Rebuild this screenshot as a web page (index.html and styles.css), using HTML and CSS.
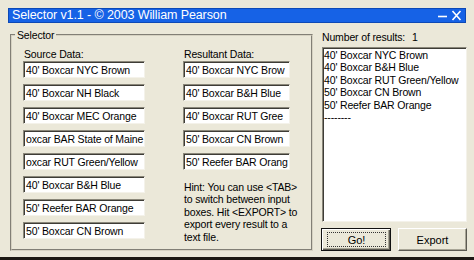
FILE: index.html
```html
<!DOCTYPE html>
<html lang="en">

<head>
    <meta charset="UTF-8">
    <meta name="viewport" content="width=device-width, initial-scale=1.0">
    <title>Selector</title>
    <link rel="stylesheet" href="styles.css">
</head>

<body>
    <div class="window">
        <div class="titlebar">
            <span class="title">Selector v1.1 - &copy; 2003 William Pearson</span>
            <span class="controls">
                <svg width="11" height="10" viewBox="0 0 11 10">
                    <path d="M1 5.5 H10" stroke="#fff" stroke-width="1.6" />
                </svg>
                <svg width="11" height="11" viewBox="0 0 11 11">
                    <path d="M1.5 1 L9.5 10 M9.5 1 L1.5 10" stroke="#fff" stroke-width="1.6" />
                </svg>
            </span>
        </div>

        <div class="main">
            <fieldset class="group">
                <legend>Selector</legend>
                <div class="col source">
                    <div class="label">Source Data:</div>
                    <div class="field">40' Boxcar NYC Brown</div>
                    <div class="field">40' Boxcar NH Black</div>
                    <div class="field">40' Boxcar MEC Orange</div>
                    <div class="field">oxcar BAR State of Maine</div>
                    <div class="field">oxcar RUT Green/Yellow</div>
                    <div class="field">40' Boxcar B&amp;H Blue</div>
                    <div class="field">50' Reefer BAR Orange</div>
                    <div class="field">50' Boxcar CN Brown</div>
                </div>
                <div class="col result">
                    <div class="label">Resultant Data:</div>
                    <div class="field">40' Boxcar NYC Brow</div>
                    <div class="field">40' Boxcar B&amp;H Blue</div>
                    <div class="field">40' Boxcar RUT Gree</div>
                    <div class="field">50' Boxcar CN Brown</div>
                    <div class="field">50' Reefer BAR Orang</div>
                    <p class="hint">Hint: You can use &lt;TAB&gt;<br>to switch between input<br>boxes. Hit &lt;EXPORT&gt; to<br>export every result to a<br>text file.</p>
                </div>
            </fieldset>

            <div class="side">
                <div class="count"><span class="count-label">Number of results:</span><span>1</span></div>
                <div class="list">
                    <div>40' Boxcar NYC Brown</div>
                    <div>40' Boxcar B&amp;H Blue</div>
                    <div>40' Boxcar RUT Green/Yellow</div>
                    <div>50' Boxcar CN Brown</div>
                    <div>50' Reefer BAR Orange</div>
                    <div>--------</div>
                </div>
                <div class="buttons">
                    <button class="btn default"><span>Go!</span></button>
                    <button class="btn">Export</button>
                </div>
            </div>
        </div>
    </div>
    <div class="bottom"></div>
</body>

</html>
```

FILE: styles.css
```css
* {
    margin: 0;
    padding: 0;
    box-sizing: border-box;
}

body {
    width: 474px;
    height: 260px;
    overflow: hidden;
    background: #ebe8d9;
    font-family: "Liberation Sans", Arial, sans-serif;
    font-size: 10.5px;
    letter-spacing: -0.15px;
    color: #000;
}

.window {
    height: 257px;
    padding: 8px 8px 0 8px;
    background: #ebe8d9;
}

.bottom {
    height: 3px;
    background: #1c1813;
}

/* title bar */
.titlebar {
    height: 15px;
    display: flex;
    align-items: center;
    justify-content: space-between;
    padding: 0 3px;
    background: #1662e6;
    border: 1px solid #0d49b6;
    color: #fff;
}

.title {
    font-size: 12.5px;
    line-height: 13px;
    letter-spacing: -0.1px;
}

.controls {
    display: flex;
    align-items: center;
    gap: 3px;
}

.controls svg {
    display: block;
}

/* main area */
.main {
    display: flex;
    margin-top: 6px;
    padding-left: 2px;
}

.group {
    width: 303px;
    height: 222px;
    border: 2px groove #d6d2c2;
    padding: 7px 21px 0 11px;
    display: flex;
    gap: 38px;
}

.group legend {
    line-height: 12px;
    padding: 0 2px;
    margin-left: -8px;
}

.col {
    display: flex;
    flex-direction: column;
}

.source {
    width: 122px;
}

.result {
    width: 107px;
}

.label {
    line-height: 12px;
    padding-left: 1px;
}

.field {
    flex-shrink: 0;
    height: 17px;
    margin-top: 6px;
    padding: 2px 1px 0 2px;
    line-height: 12px;
    white-space: nowrap;
    overflow: hidden;
    background: #fff;
    border-top: 1px solid #8a877a;
    border-left: 1px solid #8a877a;
    border-bottom: 1px solid #f4f2ea;
    border-right: 1px solid #f4f2ea;
    box-shadow: inset 1px 1px 0 #3e3c36;
}

.label+.field {
    margin-top: 1px;
}

.hint {
    margin-top: 11px;
    line-height: 12.4px;
    padding-left: 1px;
    white-space: nowrap;
}

/* right side */
.side {
    width: 146px;
    margin-left: 8px;
    padding-top: 2px;
}

.count {
    line-height: 12px;
    padding-left: 1px;
}

.count-label {
    display: inline-block;
    width: 90px;
}

.list {
    height: 175px;
    margin: 4px 0 0 1px;
    padding: 1px 0 0 1px;
    line-height: 12.4px;
    background: #fff;
    border-top: 1px solid #8a877a;
    border-left: 1px solid #8a877a;
    border-bottom: 1px solid #f4f2ea;
    border-right: 1px solid #f4f2ea;
    box-shadow: inset 1px 1px 0 #3e3c36;
}

.buttons {
    display: flex;
    gap: 7px;
    margin-top: 6px;
}

.btn {
    width: 69px;
    height: 23px;
    font-family: inherit;
    font-size: 11px;
    color: #000;
    background: #ebe8d9;
    border-top: 1px solid #fff;
    border-left: 1px solid #fff;
    border-bottom: 1px solid #5c5a52;
    border-right: 1px solid #5c5a52;
    box-shadow: inset -1px -1px 0 #a8a596;
}

.btn.default {
    width: 70px;
    border: 1px solid #111;
    box-shadow: inset 1px 1px 0 #fff, inset -1px -1px 0 #5c5a52, inset -2px -2px 0 #a8a596;
    padding: 3px 4px 3px 5px;
}

.btn.default span {
    display: block;
    height: 100%;
    line-height: 15px;
    border: 1px dotted #333;
}
```
